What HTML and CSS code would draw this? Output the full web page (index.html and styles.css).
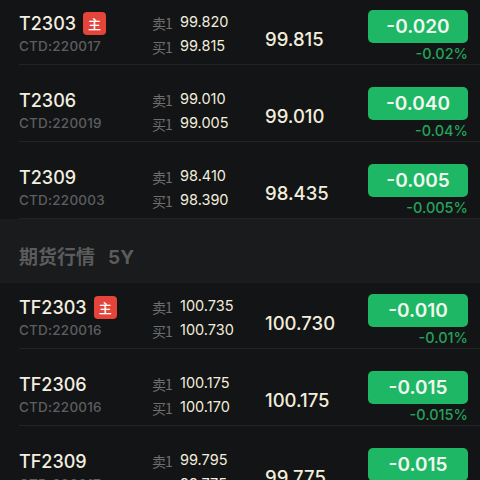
FILE: index.html
```html
<!DOCTYPE html>
<html lang="zh-CN">
<head>
<meta charset="utf-8">
<link rel="stylesheet" href="styles.css">
</head>
<body>
<div class="list">
  <div class="row">
    <div class="name-col">
      <div class="name">T2303<span class="badge">主</span></div>
      <div class="ctd">CTD:220017</div>
    </div>
    <div class="quotes">
      <div class="q"><span class="lbl">卖1</span><span class="val">99.820</span></div>
      <div class="q"><span class="lbl">买1</span><span class="val">99.815</span></div>
    </div>
    <div class="price">99.815</div>
    <div class="change"><div class="btn">-0.020</div><div class="pct">-0.02%</div></div>
  </div>
  <div class="row">
    <div class="name-col">
      <div class="name">T2306</div>
      <div class="ctd">CTD:220019</div>
    </div>
    <div class="quotes">
      <div class="q"><span class="lbl">卖1</span><span class="val">99.010</span></div>
      <div class="q"><span class="lbl">买1</span><span class="val">99.005</span></div>
    </div>
    <div class="price">99.010</div>
    <div class="change"><div class="btn">-0.040</div><div class="pct">-0.04%</div></div>
  </div>
  <div class="row">
    <div class="name-col">
      <div class="name">T2309</div>
      <div class="ctd">CTD:220003</div>
    </div>
    <div class="quotes">
      <div class="q"><span class="lbl">卖1</span><span class="val">98.410</span></div>
      <div class="q"><span class="lbl">买1</span><span class="val">98.390</span></div>
    </div>
    <div class="price">98.435</div>
    <div class="change"><div class="btn">-0.005</div><div class="pct">-0.005%</div></div>
  </div>
</div>
<div class="section-head"><span class="sh-title">期货行情</span><span class="sh-sub">5Y</span></div>
<div class="list">
  <div class="row">
    <div class="name-col">
      <div class="name">TF2303<span class="badge">主</span></div>
      <div class="ctd">CTD:220016</div>
    </div>
    <div class="quotes">
      <div class="q"><span class="lbl">卖1</span><span class="val">100.735</span></div>
      <div class="q"><span class="lbl">买1</span><span class="val">100.730</span></div>
    </div>
    <div class="price">100.730</div>
    <div class="change"><div class="btn">-0.010</div><div class="pct">-0.01%</div></div>
  </div>
  <div class="row">
    <div class="name-col">
      <div class="name">TF2306</div>
      <div class="ctd">CTD:220016</div>
    </div>
    <div class="quotes">
      <div class="q"><span class="lbl">卖1</span><span class="val">100.175</span></div>
      <div class="q"><span class="lbl">买1</span><span class="val">100.170</span></div>
    </div>
    <div class="price">100.175</div>
    <div class="change"><div class="btn">-0.015</div><div class="pct">-0.015%</div></div>
  </div>
  <div class="row">
    <div class="name-col">
      <div class="name">TF2309</div>
      <div class="ctd">CTD:220017</div>
    </div>
    <div class="quotes">
      <div class="q"><span class="lbl">卖1</span><span class="val">99.795</span></div>
      <div class="q"><span class="lbl">买1</span><span class="val">99.775</span></div>
    </div>
    <div class="price">99.775</div>
    <div class="change"><div class="btn">-0.015</div><div class="pct">-0.015%</div></div>
  </div>
</div>
</body>
</html>
```
FILE: styles.css
```css
html, body {
  margin: 0;
  padding: 0;
  background: #131415;
  height: 100%;
  overflow: hidden;
}
body {
  font-family: Inter, "Noto Sans CJK SC", sans-serif;
  color: #f2eee0;
}
.list {
  background: #131415;
}
.row {
  display: grid;
  grid-template-columns: 133px 113px 1fr 100px;
  align-items: center;
  margin-left: 19px;
  padding: 22px 12px 2px 0;
  border-bottom: 1px solid #232425;
}
.list:first-child .row:first-child {
  padding-top: 10px;
}
.section-head + .list .row:first-child {
  padding-top: 11px;
}
.name-col {
  display: flex;
  flex-direction: column;
  gap: 1px;
  margin-top: -4px;
}
.name {
  display: flex;
  align-items: center;
  font-size: 18px;
  font-weight: 500;
  line-height: 22px;
  color: #f2eee0;
}
.badge {
  display: inline-flex;
  align-items: center;
  justify-content: center;
  width: 23px;
  height: 23px;
  margin-left: 7px;
  border-radius: 4px;
  background: #e5443b;
  color: #fff;
  font-family: "Noto Sans CJK SC", sans-serif;
  font-size: 13px;
  font-weight: 500;
}
.ctd {
  font-size: 13.5px;
  font-weight: 500;
  line-height: 20px;
  color: #5c5e60;
  letter-spacing: 0.2px;
}
.quotes {
  display: flex;
  flex-direction: column;
  gap: 4px;
  margin-top: -5px;
}
.q {
  display: flex;
  align-items: center;
  height: 20px;
}
.lbl {
  width: 28px;
  font-family: "Noto Sans CJK SC", sans-serif;
  font-size: 14px;
  color: #6e6e6e;
  letter-spacing: -1px;
  padding-top: 3px;
}
.val {
  font-size: 14.5px;
  font-weight: 400;
  color: #f2eddc;
}
.price {
  font-size: 18.5px;
  font-weight: 500;
  color: #f2eddc;
  padding-top: 5px;
}
.change {
  display: flex;
  flex-direction: column;
  align-items: flex-end;
  gap: 3px;
}
.btn {
  width: 100px;
  height: 33px;
  border-radius: 5px;
  background: #1eb765;
  color: #f1f7ef;
  display: flex;
  align-items: center;
  justify-content: center;
  font-size: 19px;
  font-weight: 600;
}
.pct {
  font-size: 14.5px;
  font-weight: 500;
  line-height: 16px;
  color: #23a45b;
}
.section-head {
  background: #191b1c;
  height: 64px;
  box-sizing: border-box;
  padding: 25px 0 0 19px;
  display: flex;
  align-items: baseline;
  gap: 13px;
  color: #5b5c5d;
  font-size: 19px;
  font-weight: 700;
  line-height: 24px;
}
.sh-title {
  font-family: "Noto Sans CJK SC", sans-serif;
}
```
